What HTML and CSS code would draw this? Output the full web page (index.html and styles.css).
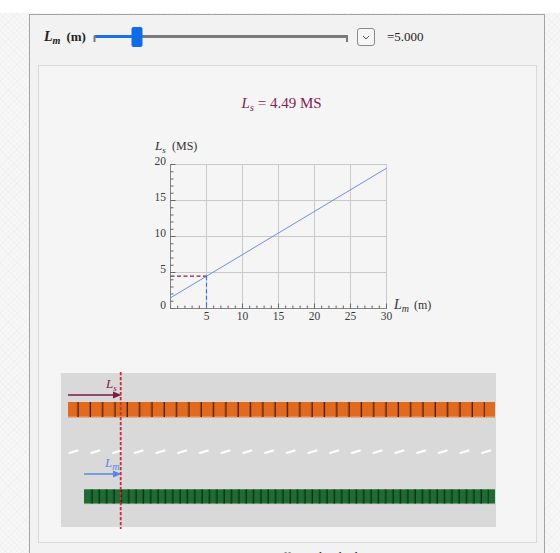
FILE: index.html
```html
<!DOCTYPE html>
<html lang="en">
<head>
    <meta charset="UTF-8">
    <title>Vehicle Length Explorer</title>
    <link rel="stylesheet" href="styles.css">
</head>
<body>
<div class="page">
    <div class="manipulate">
        <div class="controls">
            <span class="ctl-label"><i class="var">L<sub>m</sub></i><span class="unit">(m)</span></span>
            <svg class="slider" width="256" height="24" viewBox="0 0 256 24">
                <line x1="1" y1="11.5" x2="255" y2="11.5" stroke="#7a7a7a" stroke-width="3"/>
                <line x1="1.5" y1="11" x2="1.5" y2="17" stroke="#7a7a7a" stroke-width="2"/>
                <line x1="254" y1="11" x2="254" y2="17" stroke="#7a7a7a" stroke-width="2"/>
                <line x1="3" y1="11.5" x2="40" y2="11.5" stroke="#1b6fe4" stroke-width="3"/>
                <rect x="38.5" y="2" width="11" height="20" rx="2" fill="#0f6be8"/>
            </svg>
            <span class="menu-btn">
                <svg width="8" height="5" viewBox="0 0 8 5"><path d="M1 1L4 4L7 1" fill="none" stroke="#555" stroke-width="1"/></svg>
            </span>
            <span class="ctl-value">=5.000</span>
        </div>

        <div class="output">
            <div class="readout"><i>L<sub>s</sub></i> = 4.49 MS</div>

            <!-- sign length vs. lane length -->
            <svg class="plot" width="305" height="190" viewBox="0 0 305 190">
                <g stroke="#c9c9c9" stroke-width="1" fill="none">
                    <path d="M71.5 29.5V173.5M107.5 29.5V173.5M143.5 29.5V173.5M179.5 29.5V173.5M215.5 29.5V173.5M251.5 29.5V173.5"/>
                    <path d="M35.5 137.5H251.5M35.5 101.5H251.5M35.5 65.5H251.5M35.5 29.5H251.5"/>
                </g>
                <path d="M35.5 29.5V173.5H251.5" fill="none" stroke="#858585"/>
                <!-- minor and major ticks -->
                <line x1="37" y1="173.5" x2="37" y2="29" stroke="#666" stroke-width="3" stroke-dasharray="1 6.2" stroke-dashoffset="0.5"/>
                <line x1="38" y1="173.5" x2="38" y2="29" stroke="#666" stroke-width="5" stroke-dasharray="1 35" stroke-dashoffset="0.5"/>
                <line x1="35.5" y1="172" x2="252" y2="172" stroke="#666" stroke-width="3" stroke-dasharray="1 6.2" stroke-dashoffset="0.5"/>
                <line x1="35.5" y1="171" x2="252" y2="171" stroke="#666" stroke-width="5" stroke-dasharray="1 35" stroke-dashoffset="0.5"/>

                <line x1="35.5" y1="162.8" x2="251.5" y2="33.2" stroke="#6d8fe3" stroke-width="1"/>
                <path d="M35.5 141.2H71.5" stroke="#8b1c3c" stroke-width="1.2" stroke-dasharray="4 2.5"/>
                <path d="M71.5 141.2V173.5" stroke="#3a6ee8" stroke-width="1.2" stroke-dasharray="4 2.5"/>

                <g class="tick-text" text-anchor="end">
                    <text x="31" y="30">20</text>
                    <text x="31" y="66">15</text>
                    <text x="31" y="102">10</text>
                    <text x="31" y="138">5</text>
                    <text x="31" y="174">0</text>
                </g>
                <g class="tick-text" text-anchor="middle">
                    <text x="71.5" y="184.5">5</text>
                    <text x="107.5" y="184.5">10</text>
                    <text x="143.5" y="184.5">15</text>
                    <text x="179.5" y="184.5">20</text>
                    <text x="215.5" y="184.5">25</text>
                    <text x="251.5" y="184.5">30</text>
                </g>
                <text class="axis-text" x="20" y="14.5"><tspan font-style="italic" font-size="13">L</tspan><tspan font-style="italic" font-size="9" dy="3">s</tspan></text>
                <text class="axis-text" x="37" y="14.5">(MS)</text>
                <text class="axis-text" x="259" y="173.5"><tspan font-style="italic" font-size="14">L</tspan><tspan font-style="italic" font-size="10" dy="3">m</tspan></text>
                <text class="axis-text" x="279" y="173.5">(m)</text>
            </svg>

            <!-- two lanes: sign lane on top, marking lane below -->
            <svg class="road" width="436" height="158" viewBox="0 0 436 158">
                <defs>
                    <pattern id="lane-dash" patternUnits="userSpaceOnUse" x="7.3" y="75" width="21.72" height="10">
                        <path d="M0.5 6.3L10 3.3" stroke="#fff" stroke-width="2.2"/>
                    </pattern>
                </defs>
                <rect x="0" y="1" width="435" height="154" fill="#d9d9d9"/>

                <rect x="7" y="30" width="427" height="15.3" fill="#e06a20"/>
                <line x1="7" y1="44.8" x2="434" y2="44.8" stroke="#eb965e"/>
                <line x1="15.7" y1="37.6" x2="423" y2="37.6" stroke="#b04f15" stroke-width="15" stroke-dasharray="1 11.32"/>
                <line x1="16.7" y1="37.6" x2="424" y2="37.6" stroke="#43200a" stroke-width="15" stroke-dasharray="1 11.32"/>

                <rect x="7" y="75" width="428" height="10" fill="url(#lane-dash)"/>

                <rect x="23" y="117.3" width="411" height="14.7" fill="#1e6c31"/>
                <line x1="23" y1="131.6" x2="434" y2="131.6" stroke="#74a27e"/>
                <line x1="29.7" y1="124.4" x2="427" y2="124.4" stroke="#17552a" stroke-width="14" stroke-dasharray="1 6.345"/>
                <line x1="30.7" y1="124.4" x2="428" y2="124.4" stroke="#0a2e14" stroke-width="14" stroke-dasharray="1 6.345"/>

                <line x1="7" y1="23" x2="54" y2="23" stroke="#7d1a45" stroke-width="1.5"/>
                <polygon points="52,19.5 60.5,23 52,26.5" fill="#7d1a45"/>
                <text class="road-label sign" x="45" y="16.3">L<tspan font-size="9" dy="3">s</tspan></text>

                <line x1="23" y1="102" x2="54" y2="102" stroke="#5b86e5" stroke-width="1.5"/>
                <polygon points="52,98.5 60.5,102 52,105.5" fill="#5b86e5"/>
                <text class="road-label mark" x="44" y="94.7">L<tspan font-size="10" dy="3">m</tspan></text>

                <line x1="59.7" y1="0" x2="59.7" y2="157" stroke="#cc2a3b" stroke-width="1.8" stroke-dasharray="3.3 1.7"/>
            </svg>
        </div>

        <div class="caption">Commuter Traffic and Vehicles</div>
    </div>
</div>
</body>
</html>
```

FILE: styles.css
```css
html {
    overflow: hidden;
}

body {
    margin: 0;
    background: #ffffff;
    font-family: "Liberation Serif", serif;
    color: #222;
}

.page {
    margin-top: 13px;
    padding: 1px 0 0 29px;
    min-height: 600px;
    background-color: #f7f7f7;
    background-image:
        repeating-linear-gradient(45deg, rgba(0, 0, 0, 0.018) 0 1px, transparent 1px 4px),
        repeating-linear-gradient(-45deg, rgba(0, 0, 0, 0.018) 0 1px, transparent 1px 4px);
}

.manipulate {
    width: 516px;
    box-sizing: border-box;
    border: 1px solid #a3a3a3;
    background: #f2f2f2;
    padding: 0 7px 20px 8px;
}

.controls {
    display: flex;
    align-items: center;
    height: 24px;
    padding: 10px 0 0 6px;
}

.ctl-label {
    font-size: 13px;
    font-weight: bold;
    white-space: nowrap;
}

.ctl-label .var {
    font-size: 14px;
}

.ctl-label .unit {
    margin-left: 6px;
}

sub {
    font-size: 0.72em;
    vertical-align: -0.3em;
    line-height: 0;
}

.slider {
    display: block;
    margin-left: 7px;
}

.menu-btn {
    width: 18px;
    height: 18px;
    box-sizing: border-box;
    margin-left: 8px;
    border: 1px solid #8a8a8a;
    border-radius: 3px;
    background: #f7f7f7;
    display: flex;
    align-items: center;
    justify-content: center;
}

.menu-btn svg {
    display: block;
}

.ctl-value {
    margin-left: 12px;
    font-size: 13px;
}

.output {
    margin-top: 16px;
    border: 1px solid #d9d9d9;
    background: #f5f5f5;
    padding: 28px 0 12px;
}

.readout {
    text-align: center;
    font-size: 15px;
    line-height: 18px;
    color: #852050;
    padding-right: 12px;
}

.plot,
.road {
    font-family: "Liberation Serif", serif;
}

.plot {
    display: block;
    margin: 23px auto 0;
}

.tick-text {
    font-size: 11.5px;
    fill: #3a3a3a;
}

.axis-text {
    font-size: 12px;
    fill: #333;
}

.road {
    display: block;
    margin: 47px 0 0 22px;
}

.road-label {
    font-size: 13px;
    font-style: italic;
}

.road-label.sign {
    fill: #7d1a45;
}

.road-label.mark {
    fill: #5b86e5;
}

.caption {
    margin-top: 6px;
    text-align: center;
    font-size: 13px;
    line-height: 16px;
}
```
